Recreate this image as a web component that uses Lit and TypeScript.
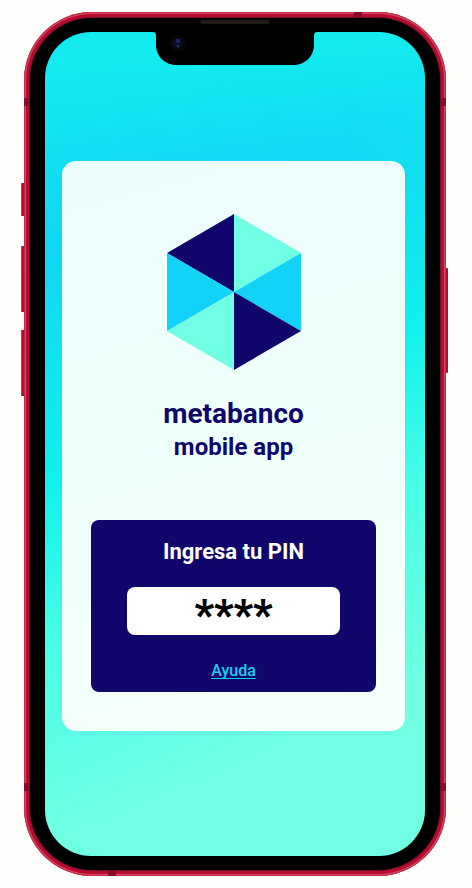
import { LitElement, html, css, svg } from "lit";
import { customElement, state } from "lit/decorators.js";

@customElement("brand-logo")
class BrandLogo extends LitElement {
  static styles = css`
    :host { display: block; width: 134px; height: 156px; }
    .mark { display: block; width: 100%; height: 100%; }
  `;
  render() {
    const slices = [
      ["#10066c", "67,78 67,0 0,39"],
      ["#70ffe4", "67,78 67,0 134,39"],
      ["#12d2f8", "67,78 134,39 134,117"],
      ["#10066c", "67,78 134,117 67,156"],
      ["#70ffe4", "67,78 67,156 0,117"],
      ["#12d2f8", "67,78 0,117 0,39"],
    ];
    return html`<svg class="mark" viewBox="0 0 134 156" role="img" aria-label="metabanco">
      ${slices.map(([fill, points]) => svg`<polygon fill=${fill} points=${points} />`)}
    </svg>`;
  }
}

@customElement("pin-form")
class PinForm extends LitElement {
  static styles = css`
    :host {
      display: block;
      background: #10066c;
      border-radius: 8px;
      padding: 16px 36px 9px;
    }
    .form { display: flex; flex-direction: column; align-items: center; margin: 0; }
    .label { color: #fff; font-size: 22px; font-weight: 700; line-height: 32px; }
    .field {
      box-sizing: border-box;
      width: 100%;
      height: 48px;
      margin: 19px 0 24px;
      padding: 6px 0 0;
      border: 0;
      border-radius: 8px;
      background: #fff;
      color: #000;
      font: 900 42px/32px Roboto, sans-serif;
      text-align: center;
      outline: none;
    }
    .help {
      color: #12d2f0;
      font-size: 16px;
      font-weight: 500;
      line-height: 24px;
      text-decoration: underline;
      text-underline-offset: 2px;
      text-decoration-thickness: 1px;
      text-decoration-skip-ink: none;
    }
  `;
  @state() private pin = "****";
  render() {
    return html`<form class="form">
      <label class="label" for="pin">Ingresa tu PIN</label>
      <input class="field" id="pin" type="text" maxlength="4" autocomplete="off" .value=${this.pin} />
      <a class="help" href="#ayuda">Ayuda</a>
    </form>`;
  }
}

@customElement("phone-frame")
class PhoneFrame extends LitElement {
  static styles = css`
    :host { display: block; position: relative; }
    .rim {
      position: relative;
      padding: 6px;
      border-radius: 68px;
      background: #b90a32;
      box-shadow: inset 0 0 0 1px #c22c4a, inset 0 0 0 2px #cf4a62;
    }
    .bezel {
      position: relative;
      padding: 14px 15px 14px 15px;
      border-radius: 62px;
      background: #000;
      box-shadow: 0 0 0 1px #6c1228;
    }
    .screen {
      border-radius: 46px;
      padding: 129px 20px 125px 17px;
      background:
        linear-gradient(#14ecf0, #14ecf000 17%),
        linear-gradient(157deg, #12e8f0, #12d6f4 23%, #12f0ec 46%, #48fde6 62%, #70ffe2 83%);
    }
    .notch {
      position: absolute;
      top: 0;
      left: 50%;
      width: 172px;
      margin-left: -86px;
      height: 53px;
    }
    .button { position: absolute; background: #b90a32; border-radius: 1px; box-shadow: inset 1px 0 0 #c83c56; }
    .left { left: -3px; width: 4px; }
    .right { right: -2px; width: 4px; }
    .mute { top: 171px; height: 33px; }
    .up { top: 234px; height: 66px; }
    .down { top: 318px; height: 66px; }
    .power { top: 256px; height: 105px; }
    .band { position: absolute; background: #8c0a2a; }
    .side { width: 6px; height: 8px; }
    .edge { width: 8px; height: 6px; }
    .band-tl { left: 0; top: 86px; }
    .band-tr { right: 0; top: 86px; }
    .band-bl { left: 0; bottom: 85px; }
    .band-br { right: 0; bottom: 85px; }
    .band-t { top: 0; right: 84px; }
    .band-b { bottom: 0; left: 84px; }
  `;
  render() {
    return html`
      <span class="button left mute"></span>
      <span class="button left up"></span>
      <span class="button left down"></span>
      <span class="button right power"></span>
      <div class="rim">
        <span class="band side band-tl"></span>
        <span class="band side band-tr"></span>
        <span class="band side band-bl"></span>
        <span class="band side band-br"></span>
        <span class="band edge band-t"></span>
        <span class="band edge band-b"></span>
        <div class="bezel">
          <div class="screen"><slot></slot></div>
          <svg class="notch" viewBox="0 0 172 53" aria-hidden="true">
            <path d="M0 0H172V14H168Q165 14 165 18V27C165 38 156 47 145 47H27C16 47 7 38 7 27V18Q7 14 4 14H0Z" fill="#000" />
            <rect x="51" y="2" width="70" height="4" rx="2" fill="#201815" />
            <path d="M54 4H118" stroke="#3b302b" stroke-width="1" stroke-dasharray="1 1" />
            <circle cx="29" cy="25" r="8" fill="#070709" />
            <circle cx="29" cy="25" r="5" fill="#0a0e28" />
            <circle cx="29" cy="23" r="2" fill="#1c2d60" />
            <circle cx="29" cy="28" r="1" fill="#2c4a8c" />
          </svg>
        </div>
      </div>
    `;
  }
}

@customElement("app-root")
class AppRoot extends LitElement {
  static styles = css`
    :host {
      display: block;
      box-sizing: border-box;
      min-height: 100vh;
      padding: 12px 26px 12px 24px;
      background: #fefefd;
      font-family: Roboto, sans-serif;
    }
    .card {
      display: flex;
      flex-direction: column;
      align-items: center;
      padding: 53px 29px 39px;
      border-radius: 14px;
      background: linear-gradient(165deg, #ecfdfd, #effffb 50%, #f6fffb);
    }
    .title {
      margin: 27px 0 57px;
      color: #10066c;
      text-align: center;
      font-weight: 700;
    }
    .name { display: block; font-size: 28px; line-height: 34px; }
    .sub { display: block; font-size: 24px; line-height: 32px; }
    .form { align-self: stretch; }
  `;
  render() {
    return html`<phone-frame>
      <main class="card">
        <brand-logo></brand-logo>
        <h1 class="title">
          <span class="name">metabanco</span>
          <span class="sub">mobile app</span>
        </h1>
        <pin-form class="form"></pin-form>
      </main>
    </phone-frame>`;
  }
}
